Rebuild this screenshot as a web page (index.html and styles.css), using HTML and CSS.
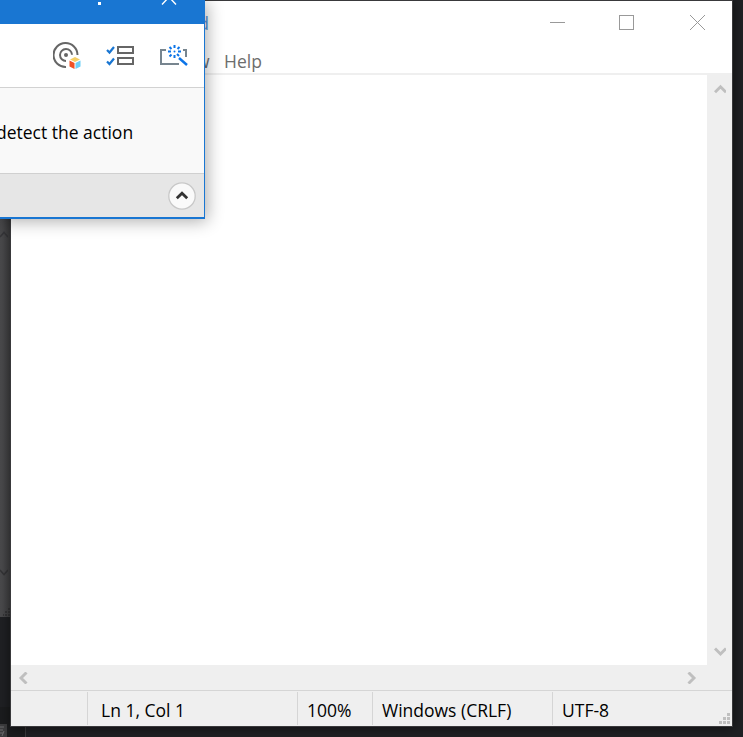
FILE: index.html
```html
<!DOCTYPE html>
<html lang="en">
<head>
<meta charset="utf-8">
<title>Notepad</title>
<link rel="stylesheet" href="styles.css">
</head>
<body>
<div class="desktop">
  <div class="back-window">
    <svg class="back-up" width="8" height="7"><path d="M0 6 4 1.5 8 6" fill="none" stroke="#37373a" stroke-width="1.5"/></svg>
    <svg class="back-down" width="8" height="7"><path d="M0 1 4 5.500 8 1" fill="none" stroke="#343436" stroke-width="1.5"/></svg>
    <svg class="back-grip" width="8" height="8" fill="#343436"><path d="M5 0h2v2H5zM2 3h2v2H2zM5 3h2v2H5zM0 6h1v2H0zM2 6h2v2H2zM5 6h2v2H5z"/></svg>
  </div>
  <div class="taskbar">
    <svg width="7" height="14"><path d="M0 0H7V14H0z" fill="#3c3c3e"/><path d="M0 3H4M0 6H3M4 7 2 12M0 9H3" stroke="#6a6a6c" fill="none"/></svg>
  </div>

  <main class="notepad">
    <header class="titlebar">
      <span class="title">d</span>
      <svg class="controls" width="156" height="16" fill="none" stroke="#999" stroke-width="1" shape-rendering="crispEdges">
        <path d="M0 7.500H15M69.500 .5H83.500V14.500H69.500z"/>
        <path d="M140 0 155 15M155 0 140 15" shape-rendering="auto"/>
      </svg>
    </header>
    <nav class="menu"><span class="menu-view">w</span><span class="menu-help">Help</span></nav>
    <section class="editor">
      <div class="page"></div>
      <div class="scroll-v">
        <svg width="12" height="10"><path d="M1 8.300 6.500 2.800 12 8.300" fill="none" stroke="#bfbfbf" stroke-width="2.900"/></svg>
        <svg width="12" height="10"><path d="M1 1.500 6.500 7 12 1.500" fill="none" stroke="#bfbfbf" stroke-width="2.900"/></svg>
      </div>
      <div class="scroll-h">
        <svg width="10" height="12"><path d="M8.500 .5 3 6 8.500 11.500" fill="none" stroke="#bfbfbf" stroke-width="2.900"/></svg>
        <svg width="10" height="12"><path d="M1.500 .5 7 6 1.500 11.500" fill="none" stroke="#bfbfbf" stroke-width="2.900"/></svg>
      </div>
    </section>
    <footer class="status">
      <div></div>
      <div><span class="ln">Ln 1, Col 1</span></div>
      <div><span class="pct">100%</span></div>
      <div><span class="crlf">Windows (CRLF)</span></div>
      <div><span class="utf">UTF-8</span>
        <svg class="grip" width="11" height="11" fill="#bfbfbf"><path d="M8 0h3v3H8zM4 4h3v3H4zM8 4h3v3H8zM0 8h3v3H0zM4 8h3v3H4zM8 8h3v3H8z"/></svg>
      </div>
    </footer>
  </main>

  <aside class="recorder">
    <div class="rec-title">
      <svg width="204" height="24" fill="none" stroke="#fff" stroke-width="1.400"><path d="M162 4.500 169 -3 176 4.500"/><path d="M98 2h3v3h-3z" fill="#fff" stroke="none"/></svg>
    </div>
    <div class="tools">
      <svg width="28" height="28" fill="none" stroke="#666" stroke-width="2">
        <path d="M24.500 13A12 12 0 1 0 13 25M19 12.800A6 6 0 1 0 13 19"/><circle cx="13" cy="13" r="2" fill="#666" stroke="none"/>
        <path d="M22 15 27 17.500 22 20 17 17.500z" fill="#f6cf65" stroke="none"/><path d="M16.500 18.500 21.500 21V27L16.500 24.500z" fill="#f05123" stroke="none"/><path d="M22.500 21 27.500 18.500V24.500L22.500 27z" fill="#6dcff6" stroke="none"/>
      </svg>
      <svg width="28" height="22" fill="none" stroke="#666" stroke-width="2">
        <path d="M12 2H27V8H12zM12 13H27V19H12z"/><path d="M1 5 3.500 7.500 8 2M1 16.500 3.500 19 8 13.500" stroke="#1976d2" stroke-width="2.200"/>
      </svg>
      <svg width="30" height="22" fill="none" stroke="#77858f" stroke-width="2">
        <path d="M7 5H2V19H20M24 5H27V12"/>
        <g stroke="#0b74e8"><path d="M20 13 28 20" stroke-width="2.400"/><path d="M15.500 0V3M15.500 10V13M9 6.500H12M19 6.500H22M10.500 2 12.500 4M20.500 2 18.500 4M10.500 11.500 12.500 9.500M18 9 20 11"/><circle cx="15.500" cy="6.500" r="1" fill="#0b74e8" stroke="none"/></g>
      </svg>
    </div>
    <div class="message"><span>detect the action</span></div>
    <div class="rec-footer"><svg width="28" height="28"><circle cx="14" cy="14" r="13.200" fill="#fafafa" stroke="#c8c8c8" stroke-width="1.300"/><path d="M8.800 16.300 14 11.300 19.200 16.300" fill="none" stroke="#333" stroke-width="2.800"/></svg></div>
  </aside>
</div>
</body>
</html>
```
FILE: styles.css
```css
* { box-sizing: border-box; }
body { margin: 0; }
svg { display: block; flex: none; }
.desktop { position: relative; width: 743px; height: 737px; overflow: hidden; background: #1f2023; font: 17.5px/24px "Open Sans", sans-serif; color: #000; }
.back-window { position: absolute; left: 0; top: 210px; width: 11px; height: 407px; background: linear-gradient(90deg, #4a4a4c, #414143); }
.back-up { position: absolute; left: 0; top: 21px; }
.back-down { position: absolute; left: 0; top: 359px; }
.back-grip { position: absolute; left: 3px; top: 398px; }
.taskbar { position: absolute; left: 0; top: 707px; width: 26px; height: 30px; padding-top: 17px; border-right: 1px solid #3b3b3d; background: #1b1c1e; }
.notepad { position: absolute; left: 10px; top: 0; width: 723px; height: 727px; display: flex; flex-direction: column; border: 1px solid #39393b; background: #fff; box-shadow: 0 1px 10px #0008; }
.titlebar { height: 48px; display: flex; justify-content: space-between; padding: 10px 26px 0 187px; }
.title { color: #5a95d8; font-size: 18px; }
.controls { margin-top: 4px; }
.menu { height: 24px; display: flex; padding-left: 185px; color: #6d6d6d; border-bottom: 0; }
.menu-view { width: 28px; }
.editor { flex: 1; display: grid; grid-template-columns: 1fr 25px; grid-template-rows: 1fr 25px; background: #efefef; border-top: 2px solid #efefef; }
.page { background: #fff; }
.scroll-v { display: flex; flex-direction: column; justify-content: space-between; align-items: center; padding: 9px 0 8px; }
.scroll-h { display: flex; justify-content: space-between; align-items: center; padding: 0 10px 0 7px; }
.status { height: 36px; border-top: 1px solid #d5d5d5; background: #efefef; display: grid; grid-template-columns: 76px 210px 75px 180px 1fr; }
.status > div { position: relative; display: flex; align-items: center; height: 33px; margin-top: 1px; border-left: 1px solid #d5d5d5; padding: 3px 0 0 9px; white-space: nowrap; }
.status > div:first-child { border: 0; }
.status > div:nth-child(2) { padding-left: 13px; }
.grip { position: absolute; right: 2px; bottom: 1px; }
.recorder { position: absolute; left: 0; top: 0; width: 205px; height: 219px; display: flex; flex-direction: column; border-right: 1px solid #1976d2; border-bottom: 2px solid #1976d2; box-shadow: 2px 2px 16px #0005; }
.rec-title { height: 24px; background: #1976d2; }
.tools { height: 64px; display: flex; align-items: center; gap: 25px; padding-left: 53px; background: #fff; border-bottom: 1px solid #d2d2d2; }
.message { height: 85px; display: flex; align-items: center; padding-top: 2px; background: #f9f9f9; white-space: nowrap; }
.message span { margin-left: -4px; }
.rec-footer { flex: 1; display: flex; justify-content: flex-end; align-items: center; padding-right: 8px; border-top: 1px solid #d0d0d0; background: #e6e6e6; }
```
